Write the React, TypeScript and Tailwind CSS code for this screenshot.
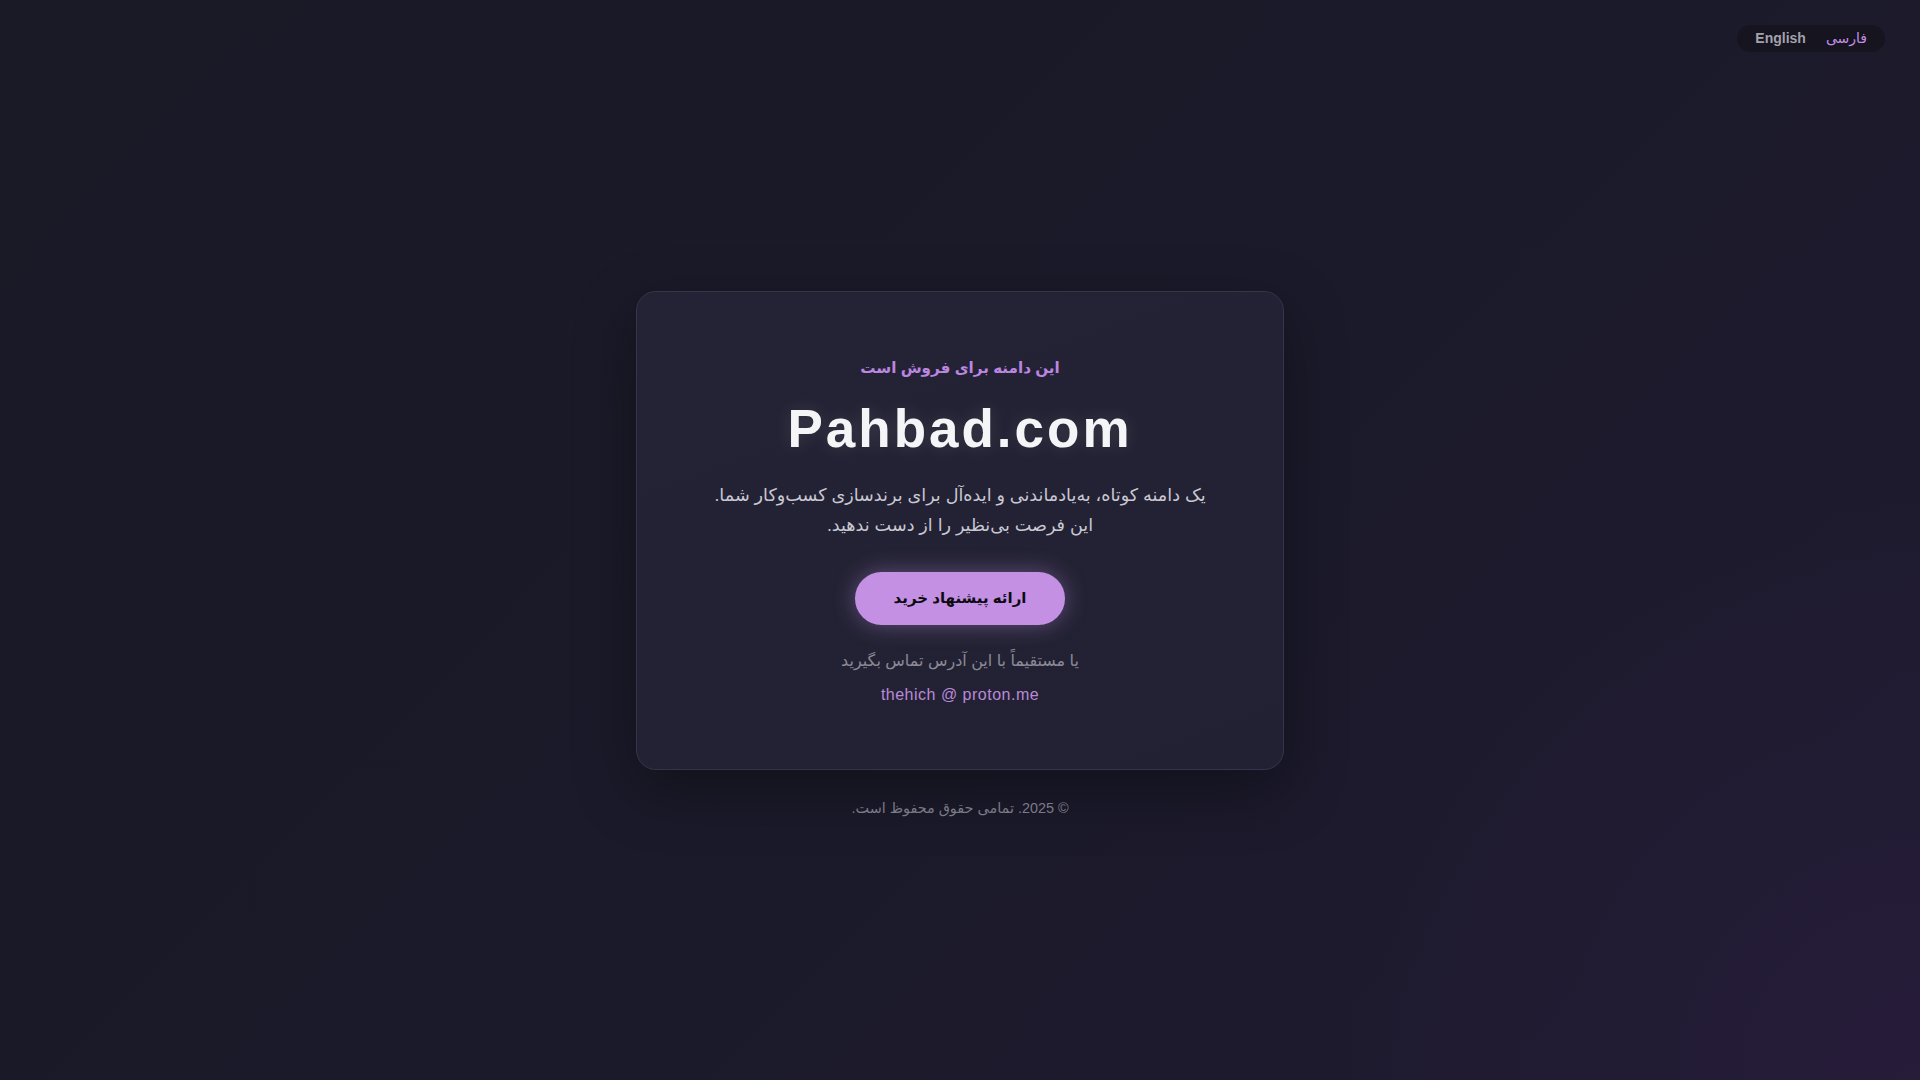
import React from "react";

const font = { fontFamily: '"Liberation Sans", "DejaVu Sans", sans-serif' };

function LangSwitch() {
  return (
    <div className="fixed top-[25px] right-[35px] flex items-center rounded-full bg-[#15141f] px-[8px] py-[4px]">
      <button className="px-[10px] text-[14px] font-medium leading-[19px] text-[#c38fe6]">فارسی</button>
      <button className="px-[10px] text-[14px] font-bold leading-[19px] text-[#a3a2ad]">English</button>
    </div>
  );
}

export default function App() {
  return (
    <div
      dir="rtl"
      style={font}
      className="relative flex min-h-screen flex-col items-center justify-center pt-[29px] bg-[radial-gradient(circle_at_100%_100%,rgba(110,50,150,0.11),transparent_30%),linear-gradient(135deg,#1a1926_0%,#1b1a2a_55%,#1e1a2f_100%)]"
    >
      <LangSwitch />

      <div className="flex w-[648px] flex-col items-center rounded-[20px] border border-[#35344a] bg-[linear-gradient(160deg,#242335,#222133)] px-16 pt-16 pb-[62px] text-center shadow-[0_20px_60px_rgba(0,0,0,0.35)]">
        <p className="text-[15.2px] font-bold leading-6 text-[#bb86e0]">این دامنه برای فروش است</p>

        <h1
          dir="ltr"
          className="mt-[17px] text-[53px] font-bold leading-[1.2] tracking-[3px] text-[#f5f5f7] [text-shadow:0_0_18px_rgba(255,255,255,0.12)]"
        >
          Pahbad.com
        </h1>

        <p className="mt-[19px] text-[17.6px] leading-[30.5px] text-[#c9c8d3]">
          یک دامنه کوتاه، به‌یادماندنی و ایده‌آل برای برندسازی کسب‌وکار شما.
          <br />
          این فرصت بی‌نظیر را از دست ندهید.
        </p>

        <button className="mt-[31px] h-[53px] rounded-full bg-[#c490e4] px-[39px] text-[15px] font-bold text-[#0d0b12] shadow-[0_0_22px_rgba(196,144,228,0.4)]">
          ارائه پیشنهاد خرید
        </button>

        <p className="mt-6 text-[16px] leading-6 text-[#8b8a96]">یا مستقیماً با این آدرس تماس بگیرید</p>

        <p dir="ltr" className="mt-[10px] text-[16px] leading-6 tracking-[0.5px] text-[#b98ad9]">
          thehich @ proton.me
        </p>
      </div>

      <p className="mt-7 text-[14.4px] leading-5 text-[#7b7a86]">© 2025. تمامی حقوق محفوظ است.</p>
    </div>
  );
}
